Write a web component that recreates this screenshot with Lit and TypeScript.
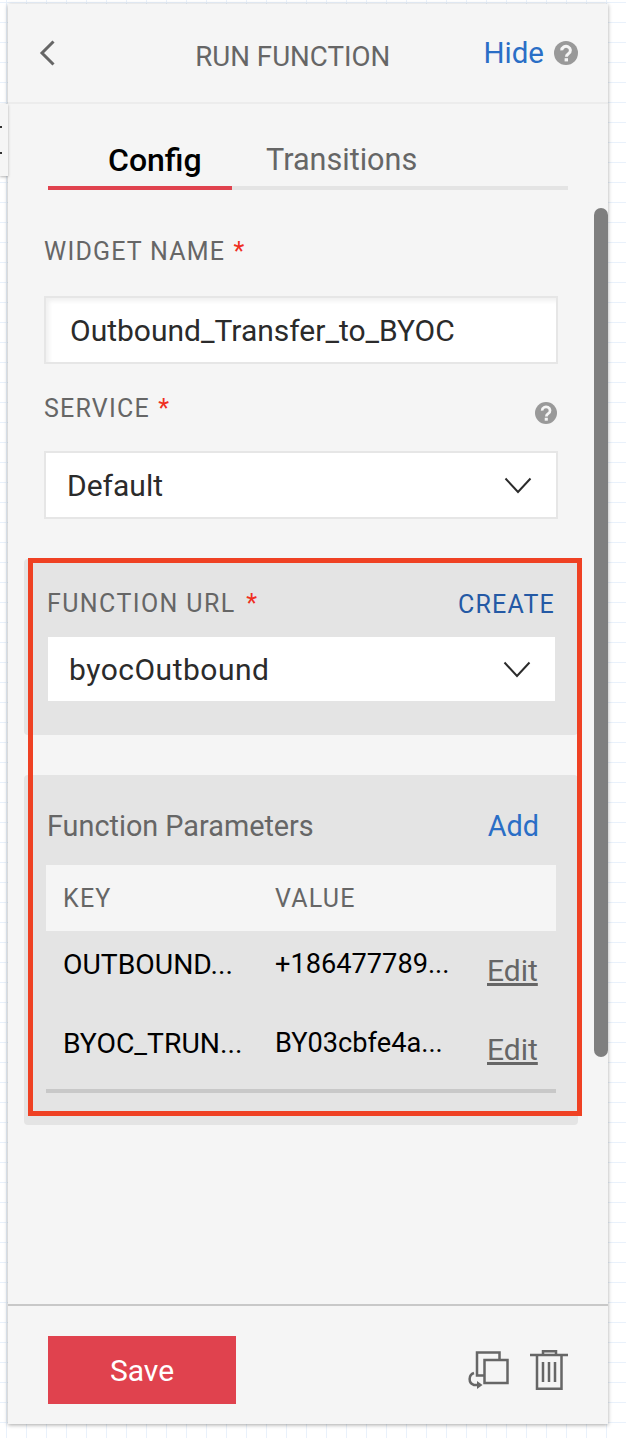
import { css, html, LitElement, svg } from "lit";
import { customElement } from "lit/decorators.js";

const chevronDown = svg`<path d="M1.5 1.5 L14 15 L26.5 1.5" fill="none" stroke="#2b2b2b" stroke-width="2" />`;

const helpIcon = svg`
    <circle cx="12" cy="12" r="12" fill="#999" />
    <path d="M7.8 9.4a4.3 4 0 1 1 6.6 3.3c-1.4 1-2 1.5-2 3" fill="none" stroke="#f5f5f5" stroke-width="3" />
    <rect x="10.6" y="17.2" width="3.4" height="3.2" fill="#f5f5f5" />
`;

@customElement("app-root")
export class AppRoot extends LitElement {
    static styles = css`
        :host {
            display: block;
            position: relative;
            width: 626px;
            height: 1438px;
            overflow: hidden;
            padding-top: 4px;
            box-sizing: border-box;
            background-color: #fff;
            background-image: linear-gradient(#e9f1fb 1px, transparent 1px),
                linear-gradient(90deg, #e9f1fb 1px, transparent 1px);
            background-size: 20px 20px;
            background-position: 6px 2px;
            font-family: Roboto, "Liberation Sans", sans-serif;
            color: #666;
        }

        .panel {
            position: relative;
            display: flex;
            flex-direction: column;
            margin-left: 8px;
            width: 600px;
            height: 1420px;
            background: #f5f5f5;
            box-shadow: 0 1px 4px rgba(0, 0, 0, 0.35);
        }

        .header {
            display: flex;
            align-items: center;
            box-sizing: border-box;
            height: 100px;
            padding: 0 30px 0 31px;
            border-bottom: 2px solid #ececec;
        }

        .header .title {
            flex: 1;
            text-align: center;
            font-size: 27.7px;
            margin: 6px 0 0 47px;
        }

        .hide {
            font-size: 29.5px;
            color: #2a6ec6;
            margin-right: 10px;
        }

        .tabs {
            display: flex;
            margin: 30px 40px 0;
            border-bottom: 4px solid #e4e4e4;
            font-size: 30.6px;
            height: 52px;
        }

        .tab {
            line-height: 52px;
            height: 56px;
            box-sizing: border-box;
        }

        .tab.active {
            width: 184px;
            padding-left: 60px;
            color: #000;
            font-size: 32px;
            font-weight: 500;
            border-bottom: 4px solid #e0424e;
        }

        .tab.other {
            margin-left: 34px;
        }

        .form {
            flex: 1;
            display: flex;
            flex-direction: column;
            padding: 0 50px 0 36px;
        }

        .label {
            font-size: 25px;
            letter-spacing: 1.2px;
            line-height: 30px;
        }

        .req {
            color: #ef2f1f;
            margin-left: 1px;
        }

        .field {
            display: flex;
            align-items: center;
            justify-content: space-between;
            box-sizing: border-box;
            height: 68px;
            background: #fff;
            border: 2px solid #e6e6e6;
            font-size: 30px;
            color: #2b2b2b;
        }

        .field.name {
            margin-top: 29px;
            padding-left: 24px;
            box-shadow: inset 3px 3px 4px #f0f0f0;
        }

        .field.select {
            padding: 0 24px 0 21px;
        }

        .field.select.url {
            height: 64px;
            border: none;
            margin-top: 18px;
            padding: 0 24px 0 21px;
            letter-spacing: 0.5px;
        }

        .form > .label {
            margin-top: 47px;
        }

        .service-row {
            display: flex;
            justify-content: space-between;
            margin: 30px 0 27px;
        }

        .service-row svg {
            margin: 8px 1px 0 0;
        }

        .group {
            margin: 0 -20px;
            padding: 30px 23px 0 24px;
            background: #e4e4e4;
            border-radius: 4px;
        }

        .group.url {
            height: 176px;
            box-sizing: border-box;
            margin-top: 40px;
        }

        .group.url .label {
            margin-left: -1px;
            letter-spacing: 1.4px;
        }

        .group.url .req {
            margin-left: 3px;
        }

        .group.params {
            height: 350px;
            box-sizing: border-box;
            margin-top: 40px;
            padding: 0 22px 0 22px;
        }

        .group-head {
            display: flex;
            justify-content: space-between;
            align-items: center;
        }

        .create {
            color: #2459a5;
            font-size: 25px;
            letter-spacing: 1.2px;
        }

        .params-head {
            box-sizing: border-box;
            height: 90px;
            font-size: 28.8px;
            padding: 12px 17px 0 1px;
        }

        .add {
            color: #2a6ec6;
        }

        .table {
            border-bottom: 4px solid #c8c8c8;
        }

        .row {
            display: grid;
            grid-template-columns: 212px 212px 1fr;
            height: 80px;
            padding-left: 17px;
            font-size: 28.3px;
            color: #000;
            align-items: center;
        }

        .row.head {
            height: 66px;
            background: #f5f5f5;
            font-size: 25px;
            letter-spacing: 1.2px;
            color: #666;
        }

        .row span {
            margin-top: -14px;
        }

        .row span.value {
            font-size: 27.2px;
        }

        .row.head span {
            margin-top: 0;
        }

        .row a {
            color: #666;
            text-decoration: underline;
            font-size: 30px;
            margin-top: -2px;
        }

        .table .row:last-child {
            height: 78px;
        }

        .footer {
            display: flex;
            align-items: center;
            box-sizing: border-box;
            height: 120px;
            padding: 10px 40px 0 40px;
            border-top: 2px solid #c8c8c8;
        }

        .save {
            width: 188px;
            height: 68px;
            margin: 0;
            border: none;
            background: #e0424e;
            color: #fff;
            font: 30px Roboto, "Liberation Sans", sans-serif;
        }

        .actions {
            display: flex;
            margin-left: auto;
            gap: 21px;
            align-items: center;
        }

        .scrollbar {
            position: absolute;
            right: 0;
            top: 204px;
            width: 14px;
            height: 849px;
            background: #7f7f7f;
            border-radius: 7px;
        }

        .edge-tab {
            position: absolute;
            left: 0;
            top: 104px;
            width: 8px;
            height: 72px;
            background: #f5f5f5;
            box-shadow: 0 1px 3px rgba(0, 0, 0, 0.3);
        }

        .edge-tab i {
            position: absolute;
            left: 0;
            width: 2px;
            height: 2px;
            background: #333;
        }

        .highlight {
            position: absolute;
            left: 28px;
            top: 558px;
            width: 554px;
            height: 558px;
            box-sizing: border-box;
            border: 5px solid #ef4123;
        }
    `;

    render() {
        return html`
            <div class="panel">
                <div class="header">
                    <svg width="16" height="26" viewBox="0 0 16 26">
                        <path d="M14.5 1.5 L3 13 L14.5 24.5" fill="none" stroke="#666" stroke-width="3" />
                    </svg>
                    <span class="title">RUN FUNCTION</span>
                    <span class="hide">Hide</span>
                    <svg width="24" height="24" viewBox="0 0 24 24">${helpIcon}</svg>
                </div>
                <div class="tabs">
                    <div class="tab active">Config</div>
                    <div class="tab other">Transitions</div>
                </div>
                <div class="form">
                    <div class="label">WIDGET NAME <span class="req">*</span></div>
                    <div class="field name">Outbound_Transfer_to_BYOC</div>
                    <div class="service-row">
                        <div class="label">SERVICE <span class="req">*</span></div>
                        <svg width="22" height="22" viewBox="0 0 24 24">${helpIcon}</svg>
                    </div>
                    <div class="field select">
                        Default
                        <svg width="28" height="17" viewBox="0 0 28 17">${chevronDown}</svg>
                    </div>
                    <div class="group url">
                        <div class="group-head">
                            <div class="label">FUNCTION URL <span class="req">*</span></div>
                            <span class="create">CREATE</span>
                        </div>
                        <div class="field select url">
                            byocOutbound
                            <svg width="28" height="17" viewBox="0 0 28 17">${chevronDown}</svg>
                        </div>
                    </div>
                    <div class="group params">
                        <div class="group-head params-head">
                            <span>Function Parameters</span>
                            <span class="add">Add</span>
                        </div>
                        <div class="table">
                            <div class="row head"><span>KEY</span><span>VALUE</span></div>
                            <div class="row">
                                <span>OUTBOUND...</span><span class="value">+186477789...</span><a>Edit</a>
                            </div>
                            <div class="row">
                                <span>BYOC_TRUN...</span><span class="value">BY03cbfe4a...</span><a>Edit</a>
                            </div>
                        </div>
                    </div>
                </div>
                <div class="footer">
                    <button class="save">Save</button>
                    <div class="actions">
                        <svg width="42" height="38" viewBox="0 0 42 38" fill="none" stroke="#666" stroke-width="2.5">
                            <path d="M17 24.5 H10 V1.5 H32.5 V9" />
                            <rect x="17.5" y="9" width="23" height="23" />
                            <path d="M7 22 A6.3 6.3 0 0 0 7 34 H10" />
                            <path d="M10 30 L15.5 34 L10 38 Z" fill="#666" stroke="none" />
                        </svg>
                        <svg width="38" height="40" viewBox="0 0 38 40" fill="none" stroke="#666" stroke-width="2.5">
                            <path d="M0 5 H38" />
                            <path d="M13 5 V1.2 H26 V5" />
                            <path d="M7 5 V38.7 H31.5 V5" />
                            <path d="M13 12 V32 M19 12 V32 M25 12 V32" />
                        </svg>
                    </div>
                </div>
                <div class="scrollbar"></div>
            </div>
            <div class="edge-tab"><i style="top: 22px"></i><i style="top: 48px"></i></div>
            <div class="highlight"></div>
        `;
    }
}
